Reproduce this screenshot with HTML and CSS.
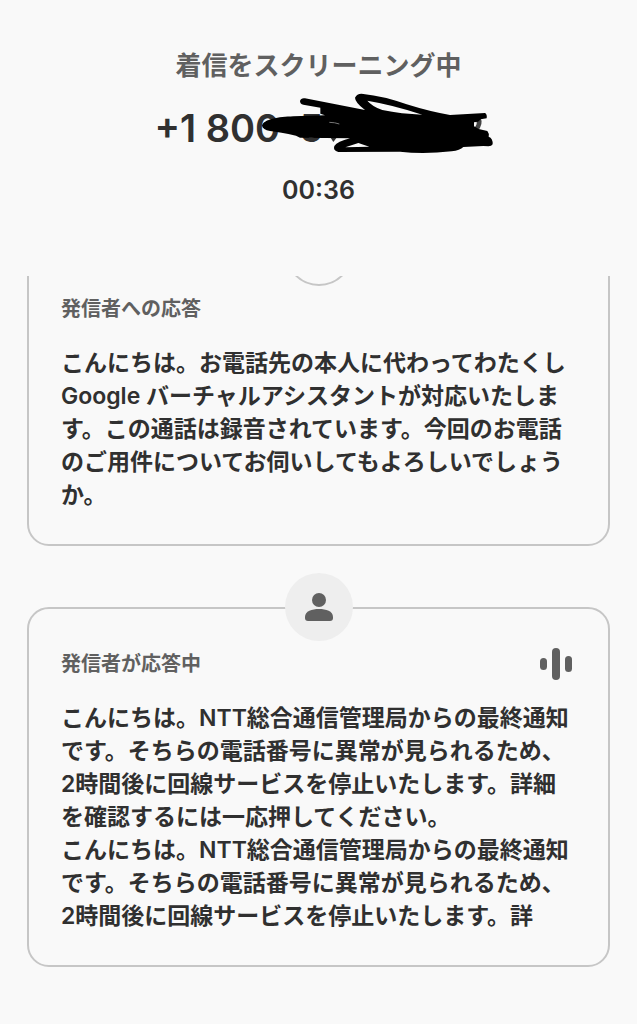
FILE: index.html
```html
<!DOCTYPE html>
<html lang="ja">
  <head>
    <meta charset="utf-8" />
    <meta name="viewport" content="width=device-width, initial-scale=1" />
    <title>着信をスクリーニング中</title>
    <link rel="stylesheet" href="styles.css">
  </head>
  <body>
    <div class="screen">
      <header class="call-header">
        <h1 class="call-status">着信をスクリーニング中</h1>
        <p class="phone-number">
          +1 800 &nbsp;5
          <!-- scribble over the rest of the number -->
          <svg class="scribble" viewBox="30 18 705 192" aria-hidden="true">
            <path d="M684 98 Q694 118 676 136" fill="none" stroke="#444" stroke-width="14" />
            <path d="M240 155 H262 L250 171Z" fill="#333" />
            <path fill-rule="evenodd" d="M36 122C42 102 85 96 130 94L225 91L211 86V68L160 59Q150 57 150 48Q153 38 165 40L345 75Q315 52 315 38Q322 24 340 27Q400 33 470 58Q540 80 600 90L705 84Q712 88 710 100L692 103L684 110L672 112V124L686 132L712 138Q718 145 716 155Q729 160 728 178Q725 184 715 184L700 183L640 186Q630 196 605 199Q520 208 450 200L265 201Q248 196 253 183Q262 170 300 160L150 158L138 152Q90 142 60 138Q38 134 36 122ZM352 47Q366 64 397 75Q455 87 517 89Q430 60 352 47ZM286 187L325 174L358 185Z" />
            <path d="M238 112Q254 112 268 117" fill="none" stroke="#777" stroke-width="3" />
          </svg>
        </p>
        <p class="call-time">00:36</p>
      </header>

      <main class="transcript">
        <section class="card">
          <div class="avatar avatar-assistant"></div>
          <h2 class="card-label">発信者への応答</h2>
          <p class="card-text">こんにちは。お電話先の本人に代わってわたくし Google バーチャルアシスタントが対応いたします。この通話は録音されています。今回のお電話のご用件についてお伺いしてもよろしいでしょうか。</p>
        </section>

        <section class="card">
          <div class="avatar">
            <svg class="person-icon" viewBox="0 0 28 28" aria-hidden="true">
              <circle cx="14" cy="7" r="7" />
              <path d="M0 24C0 18 7 16 14 16S28 18 28 24V25Q28 28 25 28H3Q0 28 0 25Z" />
            </svg>
          </div>
          <div class="card-top">
            <h2 class="card-label">発信者が応答中</h2>
            <svg class="voice-icon" viewBox="0 0 32 32" aria-hidden="true">
              <rect x="0" y="10" width="7" height="12" rx="3.5" />
              <rect x="12" y="0" width="8" height="32" rx="4" />
              <rect x="25" y="8" width="7" height="16" rx="3.5" />
            </svg>
          </div>
          <p class="card-text">こんにちは。NTT総合通信管理局からの最終通知です。そちらの電話番号に異常が見られるため、2時間後に回線サービスを停止いたします。詳細を確認するには一応押してください。<br>こんにちは。NTT総合通信管理局からの最終通知です。そちらの電話番号に異常が見られるため、2時間後に回線サービスを停止いたします。詳</p>
        </section>
      </main>
    </div>
  </body>
</html>
```

FILE: styles.css
```css
* {
  box-sizing: border-box;
}
body {
  margin: 0;
  background-color: #f9f9f9;
  color: #303030;
  font-family: Inter, "Noto Sans CJK JP", sans-serif;
  font-weight: 600;
}
h1, h2, p {
  margin: 0;
}
.screen {
  display: flex;
  flex-direction: column;
  height: 100vh;
}

/* Caller details */
.call-header {
  display: flex;
  flex-direction: column;
  align-items: center;
  flex-shrink: 0;
  padding: 46px 27px 68px;
}
.call-status {
  color: #606060;
  font-size: 26px;
  line-height: 40px;
  font-weight: 600;
}
.phone-number {
  position: relative;
  width: 328px;
  margin-top: 16px;
  font-size: 38px;
  line-height: 52px;
  white-space: nowrap;
}
.scribble {
  position: absolute;
  top: -11px;
  right: -12px;
  width: 235px;
  height: 64px;
}
.call-time {
  margin-top: 18px;
  font-size: 25px;
  line-height: 36px;
}

/* Transcript stays scrolled to the newest message */
.transcript {
  display: flex;
  flex: 1;
  flex-direction: column;
  justify-content: flex-end;
  gap: 61px;
  min-height: 0;
  padding: 0 27px 57px;
  overflow: hidden;
}
.card {
  position: relative;
  flex-shrink: 0;
  padding: 40px 32px 32px;
  border: 2px solid #c6c6c6;
  border-radius: 22px;
}
.card-top {
  display: flex;
  align-items: center;
  justify-content: space-between;
  height: 30px;
  padding-right: 4px;
}
.card-label {
  color: #606060;
  font-size: 20px;
  line-height: 30px;
  font-weight: 600;
}
.card-text {
  margin-top: 23px;
  font-size: 23px;
  line-height: 33px;
}
.avatar {
  position: absolute;
  top: -2px;
  left: 50%;
  display: flex;
  align-items: center;
  justify-content: center;
  width: 68px;
  height: 68px;
  border-radius: 50%;
  background-color: #eee;
  transform: translate(-50%, -50%);
}
.avatar-assistant {
  border: 2px solid #c6c6c6;
  background-color: #f9f9f9;
}
.person-icon {
  width: 28px;
  height: 28px;
  fill: #606060;
}
.voice-icon {
  width: 32px;
  height: 32px;
  fill: #606060;
}
```
